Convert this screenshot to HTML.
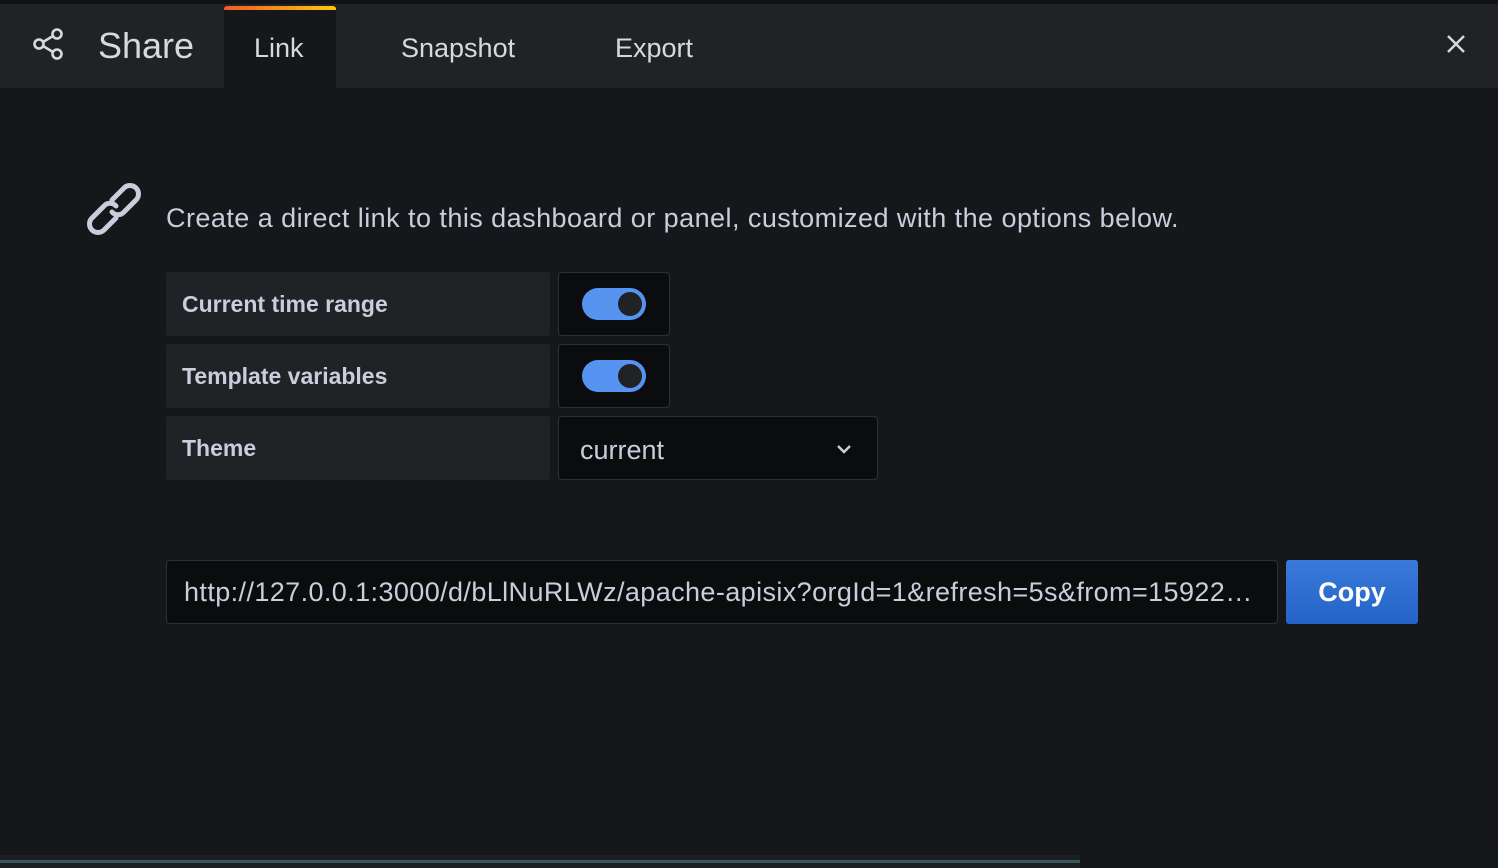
<!DOCTYPE html><html><head><style>
*{margin:0;padding:0;box-sizing:border-box}
body{width:1498px;height:868px;background:#16171b;font-family:"Liberation Sans",sans-serif;position:relative;overflow:hidden;color:#d8d9da}
.hdr{position:absolute;left:0;top:4px;width:1498px;height:84px;background:#212226}
.top{position:absolute;left:0;top:0;width:1498px;height:4px;background:#111215}
.t{position:absolute;font-size:27px;color:#d8d9da}
.tab{position:absolute;left:224px;top:6px;width:112px;height:82px;background:#16171b;border-radius:3px 3px 0 0}
.tab:before{content:"";position:absolute;left:0;top:0;right:0;height:4px;background:linear-gradient(90deg,#f05a28,#fbca0a);border-radius:3px 3px 0 0}
.lbl{position:absolute;left:166px;width:384px;height:64px;background:#212226;border-radius:3px;font-size:23px;font-weight:bold;color:#ccccdc;padding-left:16px;line-height:64px}
.sw{position:absolute;left:558px;width:112px;height:64px;background:#0b0c0e;border:1px solid #2c3036;border-radius:4px}
.sw i{position:absolute;left:23px;top:15px;width:64px;height:32px;background:#5794f2;border-radius:16px}
.sw i:after{content:"";position:absolute;right:4px;top:4px;width:24px;height:24px;border-radius:50%;background:#202226}
</style></head><body>
<div class="top"></div>
<div class="hdr"></div>
<svg style="position:absolute;left:32px;top:27px" width="34" height="34" viewBox="0 0 34 34" fill="none" stroke="#d8d9da" stroke-width="2.6"><circle cx="7" cy="17" r="4.5"/><circle cx="25" cy="7" r="4.5"/><circle cx="25" cy="27" r="4.5"/><path d="M11 15L21 9M11 19L21 25"/></svg>
<div class="t" style="left:98px;top:25px;font-size:36px">Share</div>
<div class="tab"></div>
<div class="t" style="left:254px;top:33px">Link</div>
<div class="t" style="left:401px;top:33px">Snapshot</div>
<div class="t" style="left:615px;top:33px">Export</div>
<svg style="position:absolute;left:1446px;top:34px" width="20" height="20" viewBox="0 0 20 20" stroke="#d8d9da" stroke-width="2.4"><path d="M2 2L18 18M18 2L2 18"/></svg>
<svg style="position:absolute;left:82px;top:178px" width="64" height="64" viewBox="0 0 64 64" fill="none" stroke="#ccccdc" stroke-width="5" stroke-linecap="round"><path d="M30 22L42 10a8 8 0 0 1 12 12L42 34a8 8 0 0 1-12 0"/><path d="M34 40L22 52a8 8 0 0 1-12-12L22 28a8 8 0 0 1 12 0"/></svg>
<div class="t" style="left:166px;top:203px;font-size:27px;color:#ccccdc;letter-spacing:0.45px">Create a direct link to this dashboard or panel, customized with the options below.</div>
<div class="lbl" style="top:272px">Current time range</div><div class="sw" style="top:272px"><i></i></div>
<div class="lbl" style="top:344px">Template variables</div><div class="sw" style="top:344px"><i></i></div>
<div class="lbl" style="top:416px">Theme</div>
<div class="sw" style="top:416px;width:320px;font-size:27px;color:#ccccdc;line-height:66px;padding-left:21px">current
<svg style="position:absolute;left:278px;top:27px" width="14" height="10" viewBox="0 0 14 10" fill="none" stroke="#ccccdc" stroke-width="2.4"><path d="M1 2L7 8L13 2"/></svg></div>
<div class="sw" style="left:166px;top:560px;width:1112px;font-size:27px;color:#ccccdc;line-height:62px;padding-left:17px;white-space:nowrap;letter-spacing:0.4px">http://127.0.0.1:3000/d/bLlNuRLWz/apache-apisix?orgId=1&amp;refresh=5s&amp;from=15922…</div>
<div style="position:absolute;left:1286px;top:560px;width:132px;height:64px;background:linear-gradient(#3a7ad9,#2463c7);border-radius:3px;color:#fff;font-size:27px;font-weight:bold;text-align:center;line-height:64px">Copy</div>
<div style="position:absolute;left:0;top:855px;width:1080px;height:13px;background:#1c1f21"></div>
<div style="position:absolute;left:0;top:860px;width:1080px;height:3px;background:#3a5658"></div>
<div style="position:absolute;left:1080px;top:855px;width:418px;height:13px;background:#15181b"></div>
</body></html>
